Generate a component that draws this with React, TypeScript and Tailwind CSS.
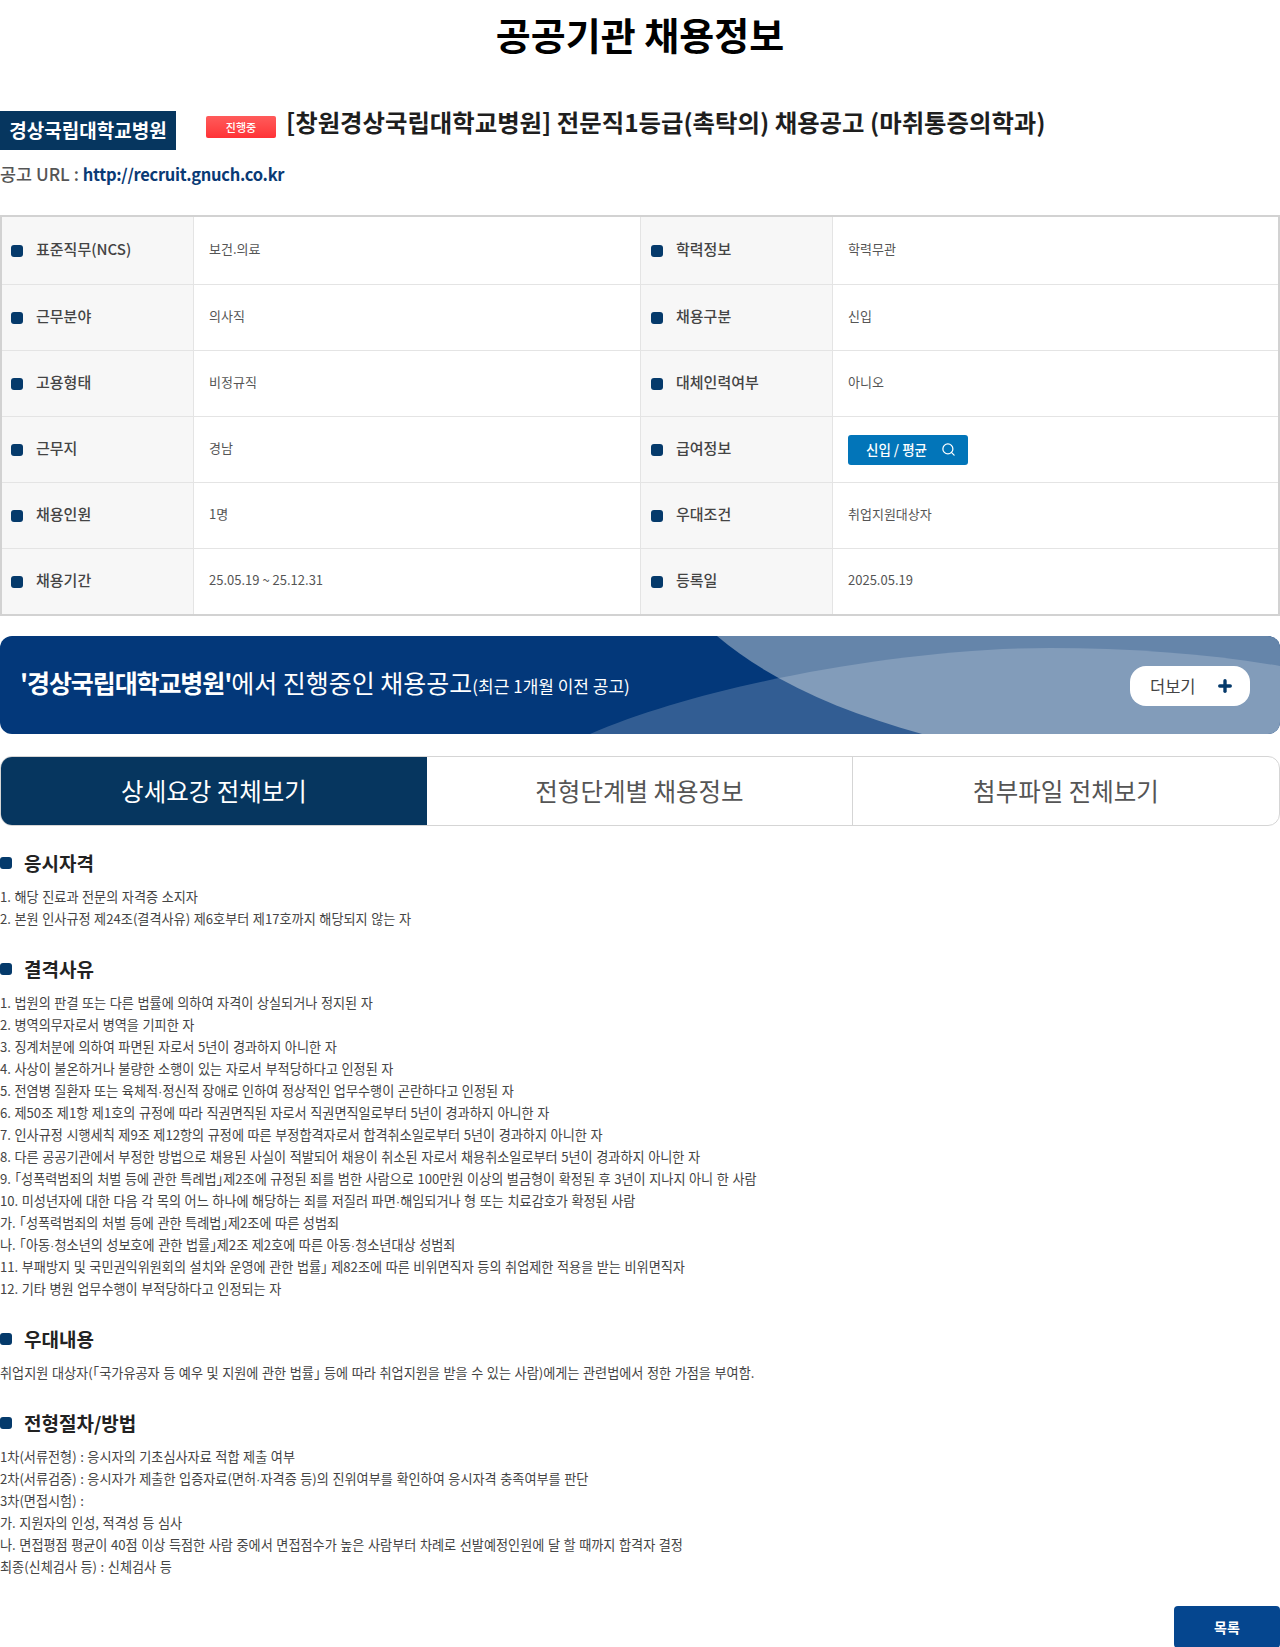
import React from 'react';
import { Plus, Search } from 'lucide-react';

const FONT = "font-['Noto_Sans_CJK_KR','Noto_Sans',sans-serif]";

const ROWS = [
  ['표준직무(NCS)', '보건.의료', '학력정보', '학력무관'],
  ['근무분야', '의사직', '채용구분', '신입'],
  ['고용형태', '비정규직', '대체인력여부', '아니오'],
  ['근무지', '경남', '급여정보', ''],
  ['채용인원', '1명', '우대조건', '취업지원대상자'],
  ['채용기간', '25.05.19 ~ 25.12.31', '등록일', '2025.05.19'],
];

const SECTIONS = [
  {
    title: '응시자격',
    lines: ['1. 해당 진료과 전문의 자격증 소지자', '2. 본원 인사규정 제24조(결격사유) 제6호부터 제17호까지 해당되지 않는 자'],
  },
  {
    title: '결격사유',
    lines: [
      '1. 법원의 판결 또는 다른 법률에 의하여 자격이 상실되거나 정지된 자',
      '2. 병역의무자로서 병역을 기피한 자',
      '3. 징계처분에 의하여 파면된 자로서 5년이 경과하지 아니한 자',
      '4. 사상이 불온하거나 불량한 소행이 있는 자로서 부적당하다고 인정된 자',
      '5. 전염병 질환자 또는 육체적·정신적 장애로 인하여 정상적인 업무수행이 곤란하다고 인정된 자',
      '6. 제50조 제1항 제1호의 규정에 따라 직권면직된 자로서 직권면직일로부터 5년이 경과하지 아니한 자',
      '7. 인사규정 시행세칙 제9조 제12항의 규정에 따른 부정합격자로서 합격취소일로부터 5년이 경과하지 아니한 자',
      '8. 다른 공공기관에서 부정한 방법으로 채용된 사실이 적발되어 채용이 취소된 자로서 채용취소일로부터 5년이 경과하지 아니한 자',
      '9. 「성폭력범죄의 처벌 등에 관한 특례법」제2조에 규정된 죄를 범한 사람으로 100만원 이상의 벌금형이 확정된 후 3년이 지나지 아니 한 사람',
      '10. 미성년자에 대한 다음 각 목의 어느 하나에 해당하는 죄를 저질러 파면·해임되거나 형 또는 치료감호가 확정된 사람',
      '가. 「성폭력범죄의 처벌 등에 관한 특례법」제2조에 따른 성범죄',
      '나. 「아동·청소년의 성보호에 관한 법률」제2조 제2호에 따른 아동·청소년대상 성범죄',
      '11. 부패방지 및 국민권익위원회의 설치와 운영에 관한 법률」 제82조에 따른 비위면직자 등의 취업제한 적용을 받는 비위면직자',
      '12. 기타 병원 업무수행이 부적당하다고 인정되는 자',
    ],
  },
  {
    title: '우대내용',
    lines: ['취업지원 대상자(「국가유공자 등 예우 및 지원에 관한 법률」 등에 따라 취업지원을 받을 수 있는 사람)에게는 관련법에서 정한 가점을 부여함.'],
  },
  {
    title: '전형절차/방법',
    lines: [
      '1차(서류전형) : 응시자의 기초심사자료 적합 제출 여부',
      '2차(서류검증) : 응시자가 제출한 입증자료(면허·자격증 등)의 진위여부를 확인하여 응시자격 충족여부를 판단',
      '3차(면접시험) :',
      '가. 지원자의 인성, 적격성 등 심사',
      '나. 면접평점 평균이 40점 이상 득점한 사람 중에서 면접점수가 높은 사람부터 차례로 선발예정인원에 달 할 때까지 합격자 결정',
      '최종(신체검사 등) : 신체검사 등',
    ],
  },
];

// brackets and middle dots are narrow in the original font
const Line = ({ text }: { text: string }) => (
  <p className="h-[22px]">
    {text.split(/([「」·])/).map((part, i) => {
      if (part === '·') return <span key={i} className="font-['Liberation_Sans',sans-serif]">·</span>;
      if (part === '「' || part === '」') return <span key={i} className="[font-feature-settings:'halt']">{part}</span>;
      return part;
    })}
  </p>
);

const Bullet = () => <span className="w-3 h-3 rounded-[3px] bg-[#053a6b] shrink-0" />;

const Th = ({ label, right }: { label: string; right?: boolean }) => (
  <div className={`w-[192px] shrink-0 bg-[#f7f7f7] border-r border-[#e4e4e4] flex items-center gap-[13px] ${right ? 'pl-[10px]' : 'pl-[9px]'}`}>
    <Bullet />
    <span className="text-[15px] font-medium text-[#444] -mt-[3px]">{label}</span>
  </div>
);

const App: React.FC = () => {
  return (
    <div className={`${FONT} w-[1280px] bg-white text-[#333]`}>
      <h1 className="h-[111px] pt-[4px] text-center text-[38px] leading-[60px] font-bold text-black">공공기관 채용정보</h1>

      <div className="flex items-start h-[39px]">
        <div className="w-[176px] h-[39px] bg-[#06365f] text-white text-[19px] font-bold flex items-center justify-center">경상국립대학교병원</div>
        <span className="ml-[30px] mt-[5px] w-[70px] h-[22px] rounded-[2px] bg-linear-to-b from-[#ff5a5a] to-[#ff3136] text-white text-[11px] font-medium flex items-center justify-center">진행중</span>
        <div className="ml-[10px] -mt-[5px] text-[24.4px] leading-[32px] font-bold text-[#1e1e1e]">[창원경상국립대학교병원] 전문직1등급(촉탁의) 채용공고 (마취통증의학과)</div>
      </div>

      <div className="mt-[10px] h-[28px] text-[17.4px] leading-[28px] font-medium text-[#555]">
        공고 URL : <a className="text-[16.5px] font-bold text-[#0a3a75] tracking-[-0.3px]">http://recruit.gnuch.co.kr</a>
      </div>

      <div className="mt-[27px] border-2 border-[#d2d2d2]">
        {ROWS.map((row, i) => (
          <div key={i} className={`flex ${i === 0 ? 'h-[67px]' : 'h-[66px]'} ${i > 0 ? 'border-t border-[#e4e4e4]' : ''}`}>
            <Th label={row[0]} />
            <div className="w-[447px] shrink-0 border-r border-[#e4e4e4] flex items-center pl-[15px] pb-[4px] text-[13px] text-[#555]">{row[1]}</div>
            <Th label={row[2]} right />
            <div className="flex-1 flex items-center pl-[15px] text-[13px] text-[#555]">
              {row[2] === '급여정보' ? (
                <button className="w-[120px] h-[30px] rounded-[3px] bg-[#0275b9] text-white text-[13.5px] font-medium flex items-center justify-center gap-[14px] pl-[6px]">
                  신입 / 평균 <Search size={15} strokeWidth={2} />
                </button>
              ) : <span className="pb-[4px]">{row[3]}</span>}
            </div>
          </div>
        ))}
      </div>

      <div className="relative mt-[20px] h-[98px] rounded-[12px] overflow-hidden bg-[#03387a] flex items-center justify-between pl-[20px] pr-[30px]">
        <svg className="absolute inset-0" width="1280" height="98" viewBox="0 0 1280 98">
          <path d="M717 0C770 45 840 75 922 98L1280 98L1280 0Z" fill="#6585aa" />
          <path d="M590 98C700 50 900 12 1050 12C1130 12 1210 18 1280 30L1280 98Z" fill="#fff" fillOpacity="0.19" />
        </svg>
        <div className="relative text-white text-[25px] whitespace-nowrap -mt-1">
          <b className="font-bold tracking-[-1.1px]">'경상국립대학교병원'</b>에서 진행중인 채용공고<span className="text-[17px]">(최근 1개월 이전 공고)</span>
        </div>
        <div className="relative mt-[2px] w-[120px] h-[40px] rounded-[16px] bg-white flex items-center justify-between pl-[20px] pr-[16px] text-[16.5px] text-[#444]">
          더보기 <Plus size={18} strokeWidth={4.5} className="text-[#053a6b]" />
        </div>
      </div>

      <div className="mt-[22px] h-[70px] flex rounded-[12px] border border-[#d5d5d5] overflow-hidden text-[24.5px]">
        <div className="w-[426px] bg-[#06365f] text-white flex items-center justify-center">상세요강 전체보기</div>
        <div className="w-[426px] border-r border-[#d5d5d5] text-[#555] flex items-center justify-center">전형단계별 채용정보</div>
        <div className="flex-1 text-[#555] flex items-center justify-center">첨부파일 전체보기</div>
      </div>

      <div className="mt-[21px]">
        {SECTIONS.map((s, i) => (
          <div key={s.title} className={i > 0 ? 'mt-[23px]' : ''}>
            <div className="flex items-center gap-[12px] h-[32px]">
              <Bullet />
              <h3 className="text-[19px] font-bold text-[#222]">{s.title}</h3>
            </div>
            <div className="mt-[7px] text-[13.15px] leading-[22px] [word-spacing:0.6px] text-[#444]">
              {s.lines.map((l) => <Line key={l} text={l} />)}
            </div>
          </div>
        ))}
      </div>

      <div className="mt-[28px] flex justify-end">
        <button className="w-[106px] h-[42px] rounded-[4px] bg-[#05468f] text-white text-[14px] font-bold">목록</button>
      </div>
    </div>
  );
};

export default App;
